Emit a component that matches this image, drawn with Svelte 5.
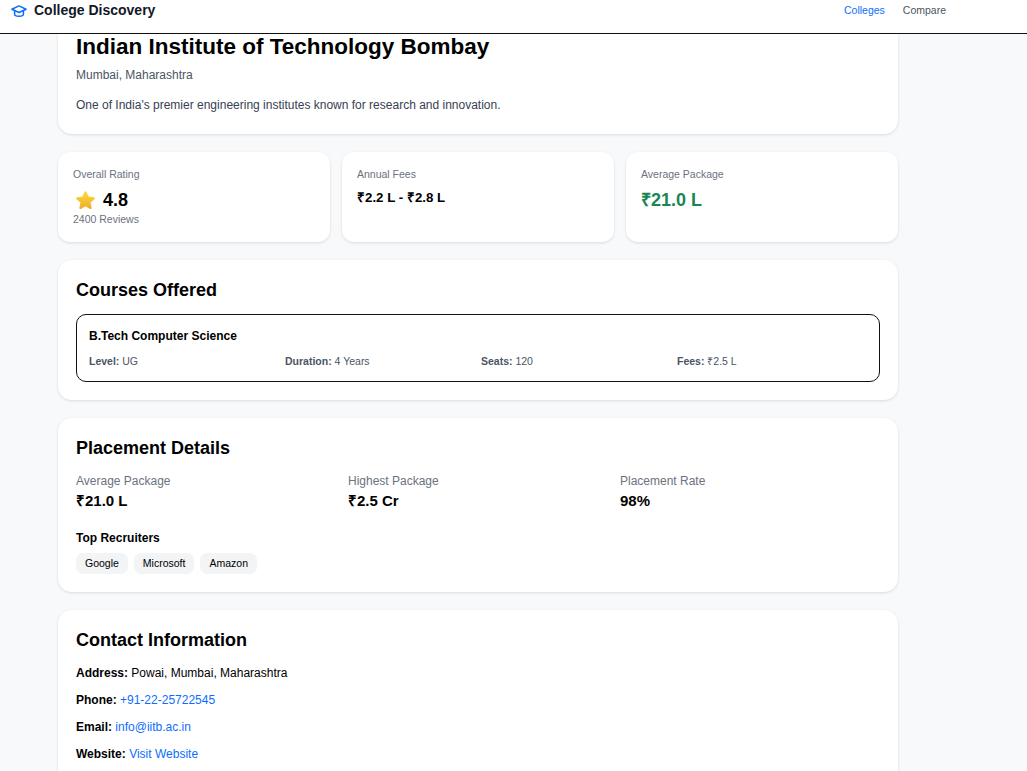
<script>
	const stats = [
		{ label: 'Annual Fees', value: '₹2.2 L - ₹2.8 L', kind: 'fees' },
		{ label: 'Average Package', value: '₹21.0 L', kind: 'package' }
	];

	const courseMeta = [
		{ key: 'Level:', value: 'UG' },
		{ key: 'Duration:', value: '4 Years' },
		{ key: 'Seats:', value: '120' },
		{ key: 'Fees:', value: '₹2.5 L' }
	];

	const placements = [
		{ label: 'Average Package', value: '₹21.0 L' },
		{ label: 'Highest Package', value: '₹2.5 Cr' },
		{ label: 'Placement Rate', value: '98%' }
	];

	const recruiters = ['Google', 'Microsoft', 'Amazon'];
</script>

<div class="page">
	<header class="navbar">
		<div class="brand">
			<svg class="cap" viewBox="0 0 16 12" width="16" height="12" aria-hidden="true">
				<path d="M8 .9 .9 4.2 8 7.5l7.1-3.3z" fill="none" stroke="#0d6efd" stroke-width="1.5" stroke-linejoin="round" />
				<path d="M3.6 5.6v3.6c0 1 2 2 4.4 2s4.4-1 4.4-2V5.6" fill="none" stroke="#0d6efd" stroke-width="1.5" />
			</svg>
			<span>College Discovery</span>
		</div>
		<nav class="links">
			<span class="active">Colleges</span>
			<span>Compare</span>
		</nav>
	</header>

	<main class="content">
		<section class="card hero">
			<h1>Indian Institute of Technology Bombay</h1>
			<p class="location">Mumbai, Maharashtra</p>
			<p class="about">One of India's premier engineering institutes known for research and innovation.</p>
		</section>

		<div class="stats">
			<div class="stat">
				<div class="stat-label">Overall Rating</div>
				<div class="rating">
					<svg viewBox="1.5 2 17 16.5" width="19" height="19" aria-hidden="true">
						<defs>
							<linearGradient id="starFill" x1="0" y1="0" x2="0" y2="1">
								<stop offset="0" stop-color="#fdd835" />
								<stop offset="1" stop-color="#eeb02b" />
							</linearGradient>
						</defs>
						<path d="M10 3l2.2 4.7 5.1.6-3.8 3.5 1 5.1-4.5-2.5-4.5 2.5 1-5.1-3.8-3.5 5.1-.6z" fill="url(#starFill)" stroke="url(#starFill)" stroke-width="2" stroke-linejoin="round" />
					</svg>
					<span>4.8</span>
				</div>
				<div class="reviews">2400 Reviews</div>
			</div>
			{#each stats as stat}
				<div class="stat">
					<div class="stat-label">{stat.label}</div>
					<div class={stat.kind}>{stat.value}</div>
				</div>
			{/each}
		</div>

		<section class="card">
			<h2>Courses Offered</h2>
			<div class="course">
				<h3>B.Tech Computer Science</h3>
				<div class="course-meta">
					{#each courseMeta as item}
						<div><b>{item.key}</b> {item.value}</div>
					{/each}
				</div>
			</div>
		</section>

		<section class="card">
			<h2>Placement Details</h2>
			<div class="placements">
				{#each placements as item}
					<div>
						<div class="placement-label">{item.label}</div>
						<div class="placement-value">{item.value}</div>
					</div>
				{/each}
			</div>
			<h4>Top Recruiters</h4>
			<div class="chips">
				{#each recruiters as name}
					<span class="chip">{name}</span>
				{/each}
			</div>
		</section>

		<section class="card contact">
			<h2>Contact Information</h2>
			<p class="first"><b>Address:</b> Powai, Mumbai, Maharashtra</p>
			<p><b>Phone:</b> <span class="link">+91-22-25722545</span></p>
			<p><b>Email:</b> <span class="link">info@iitb.ac.in</span></p>
			<p><b>Website:</b> <span class="link">Visit Website</span></p>
		</section>
	</main>
</div>

<style>
	:global(body) {
		background: #f8f9fb;
		font-family: "Liberation Sans", Arial, sans-serif;
	}

	* {
		box-sizing: border-box;
		margin: 0;
	}

	.page {
		height: 100vh;
		overflow: hidden;
	}

	.navbar {
		display: flex;
		justify-content: space-between;
		height: 34px;
		padding-left: 11px;
		background: #fff;
		border-bottom: 1px solid #111;
	}

	.brand {
		display: flex;
		align-items: flex-start;
		gap: 7px;
		font-size: 14px;
		font-weight: 700;
		line-height: 20px;
		color: #111827;
	}

	.cap {
		margin-top: 5px;
	}

	.links {
		display: flex;
		gap: 18px;
		padding-right: 81px;
		font-size: 10.5px;
		line-height: 20px;
		color: #4b5563;
	}

	.active {
		color: #0d6efd;
	}

	.content {
		width: 840px;
		margin-left: 58px;
		display: flex;
		flex-direction: column;
		gap: 18px;
	}

	.card {
		padding: 18px;
		background: #fff;
		border-radius: 14px;
		box-shadow: 0 1px 3px rgba(0, 0, 0, 0.12);
	}

	.hero {
		padding-top: 0;
		height: 100px;
		border-radius: 0 0 14px 14px;
	}

	h1 {
		font-size: 22.5px;
		line-height: 26px;
		color: #000;
	}

	.location {
		margin-top: 7px;
		font-size: 12px;
		line-height: 16px;
		color: #4b5563;
	}

	.about {
		margin-top: 14px;
		font-size: 12px;
		line-height: 16px;
		color: #374151;
	}

	.stats {
		display: grid;
		grid-template-columns: repeat(3, 1fr);
		gap: 12px;
	}

	.stat {
		height: 90px;
		padding: 15px;
		background: #fff;
		border-radius: 12px;
		box-shadow: 0 1px 3px rgba(0, 0, 0, 0.12);
	}

	.stat-label {
		font-size: 10.5px;
		line-height: 14px;
		color: #6b7280;
	}

	.rating {
		display: flex;
		align-items: center;
		gap: 8px;
		margin-top: 8px;
		padding-left: 3px;
		font-size: 18px;
		font-weight: 700;
		line-height: 22px;
		color: #000;
	}

	.reviews {
		margin-top: 1px;
		font-size: 10.5px;
		line-height: 14px;
		color: #6b7280;
	}

	.fees {
		margin-top: 8px;
		font-size: 13.3px;
		font-weight: 700;
		line-height: 18px;
		color: #000;
	}

	.package {
		margin-top: 8px;
		font-size: 18px;
		font-weight: 700;
		line-height: 22px;
		color: #198754;
	}

	h2 {
		font-size: 18px;
		line-height: 24px;
		color: #000;
	}

	.course {
		margin-top: 12px;
		height: 68px;
		padding: 12px;
		border: 1px solid #111;
		border-radius: 10px;
	}

	h3 {
		font-size: 12px;
		line-height: 18px;
		color: #000;
	}

	.course-meta {
		display: grid;
		grid-template-columns: repeat(4, 1fr);
		gap: 0 6px;
		margin-top: 9px;
		font-size: 10.5px;
		line-height: 14px;
		color: #4b5563;
	}

	.placements {
		display: grid;
		grid-template-columns: repeat(3, 1fr);
		gap: 12px;
		margin-top: 13px;
	}

	.placement-label {
		font-size: 12px;
		line-height: 16px;
		color: #6b7280;
	}

	.placement-value {
		margin-top: 3px;
		font-size: 15px;
		font-weight: 700;
		line-height: 18px;
		color: #000;
	}

	h4 {
		margin-top: 20px;
		font-size: 12px;
		line-height: 16px;
		color: #000;
	}

	.chips {
		display: flex;
		gap: 6px;
		margin-top: 7px;
	}

	.chip {
		padding: 3px 9px;
		font-size: 10.5px;
		line-height: 15px;
		color: #000;
		background: #f3f4f6;
		border-radius: 7px;
	}

	.contact {
		padding-bottom: 30px;
	}

	.contact p {
		margin-top: 11px;
		font-size: 12px;
		line-height: 16px;
		color: #000;
	}

	.contact .first {
		margin-top: 13px;
	}

	.link {
		color: #0d6efd;
	}
</style>
